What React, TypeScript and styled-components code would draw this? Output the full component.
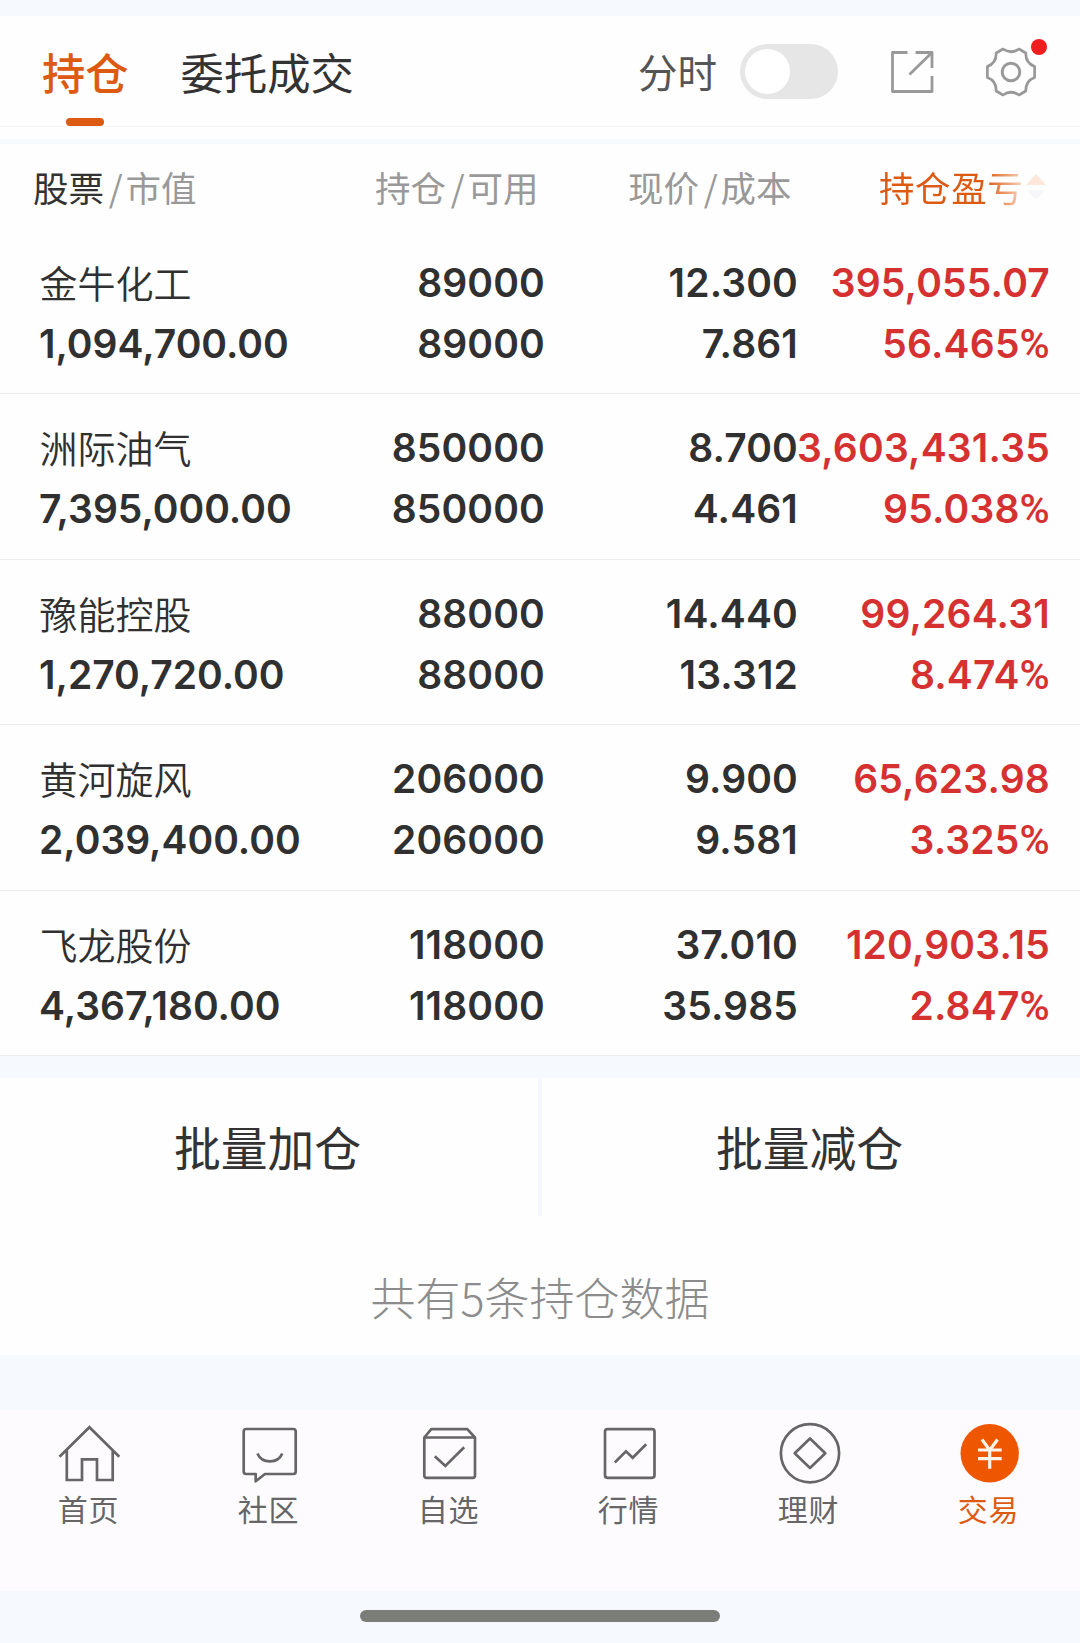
import React from 'react';
import styled, { createGlobalStyle } from 'styled-components';

const CJK = `"Noto Sans CJK SC", "Noto Sans", sans-serif`;
const ORANGE = '#dd5a12';
const BAND = '#f6faff';

const GlobalStyle = createGlobalStyle`
  * { box-sizing: border-box; }
  body { margin: 0; background: ${BAND}; font-family: ${CJK}; color: #333; }
  button { border: 0; padding: 0; background: none; font: inherit; color: inherit; }
`;

const Screen = styled.div`
  display: flex;
  flex-direction: column;
  width: 1080px;
  height: 1643px;
  padding-top: 16px;
  background: ${BAND};
  overflow: hidden;
  white-space: nowrap;
`;

const TopBar = styled.header`
  display: flex;
  justify-content: space-between;
  height: 111px;
  padding: 0 43px 0 42px;
  background: #fefefe;
  border-bottom: 1px solid #f3f5f7;
`;

const Tabs = styled.nav`
  display: flex;
  gap: 52px;
`;

const Tab = styled.button<{ $active?: boolean }>`
  display: flex;
  flex-direction: column;
  align-items: center;
  height: 110px;
  padding-top: 23px;
  font-size: 43.3px;
  line-height: 64px;
  font-weight: ${(p) => (p.$active ? 500 : 400)};
  color: ${(p) => (p.$active ? ORANGE : '#333')};

  &::after {
    content: '';
    width: 38px;
    height: 8px;
    margin-top: 15px;
    border-radius: 4px;
    background: ${(p) => (p.$active ? ORANGE : 'transparent')};
  }
`;

const Tools = styled.div`
  display: flex;
  align-items: center;
  height: 111px;
`;

const ToolLabel = styled.span`
  font-size: 39.5px;
  line-height: 60px;
  color: #555;
  margin: -2px 23px 0 0;
`;

const Switch = styled.button`
  width: 98px;
  height: 55px;
  padding: 5px;
  border-radius: 28px;
  background: #e6e6e6;
`;

const Knob = styled.span`
  display: block;
  width: 45px;
  height: 45px;
  border-radius: 50%;
  background: #fff;
`;

const IconButton = styled.button<{ $gap: number }>`
  position: relative;
  display: flex;
  margin-left: ${(p) => p.$gap}px;
`;

const Dot = styled.i`
  position: absolute;
  top: -7px;
  right: -10px;
  width: 16px;
  height: 16px;
  border-radius: 50%;
  background: #f01e1e;
`;

const Gap = styled.div<{ $h: number; $color?: string }>`
  flex: none;
  height: ${(p) => p.$h}px;
  background: ${(p) => p.$color || BAND};
`;

const TableHead = styled.div`
  display: grid;
  grid-template-columns: 342px 253px 251px 1fr;
  height: 84.5px;
  padding: 17px 30px 0 33px;
  background: #fefefe;
  font-size: 35.5px;
  line-height: 52px;
  color: #999;
`;

const HeadCell = styled.div<{ $strong?: boolean }>`
  display: flex;

  span:first-child { color: ${(p) => (p.$strong ? '#333' : 'inherit')}; }
`;

const Slash = styled.span`
  width: 21.5px;
  padding-left: 2px;
  text-align: center;
`;

const SortCell = styled.div`
  display: flex;
  align-items: center;
  height: 52px;
`;

const SortLabel = styled.span`
  letter-spacing: 0.6px;
  background: linear-gradient(90deg, ${ORANGE} 74%, #f8d3bd 100%);
  background-clip: text;
  color: transparent;
`;

const Row = styled.div`
  display: grid;
  grid-template-columns: 263px 243px 253px 252px;
  height: 165.5px;
  padding: 23px 30px 0 39px;
  background: #fefefe;
  border-bottom: 1px solid #ededed;
`;

const Cell = styled.div<{ $right?: boolean; $gain?: boolean }>`
  display: flex;
  flex-direction: column;
  align-items: ${(p) => (p.$right ? 'flex-end' : 'flex-start')};
  min-width: 0;
  color: ${(p) => (p.$gain ? '#d63131' : '#303030')};
  letter-spacing: ${(p) => (p.$gain ? '0.2px' : p.$right ? '0.15px' : '0')};
`;

const Num = styled.span`
  font-family: Inter, "Liberation Sans", sans-serif;
  font-size: 39px;
  font-weight: 600;
  line-height: 61px;
`;

const Percent = styled.span`
  font-family: Roboto, sans-serif;
  font-size: 41px;
  font-weight: 500;
  line-height: 1;
`;

const Name = styled.span`
  height: 61px;
  margin-left: 0.6px;
  font-size: 38px;
  font-weight: 350;
  line-height: 59px;
`;

const Actions = styled.div`
  display: flex;
  height: 138px;
  background: #fefefe;
`;

const Action = styled.button`
  flex: 1;
  font-size: 46.8px;
  line-height: 136px;
  padding: 0 3px 2px 0;

  & + & { border-left: 4px solid #f6f7ff; }
`;

const Summary = styled.div`
  height: 139px;
  padding-top: 48px;
  background: #fefefe;
  text-align: center;
  font-size: 45px;
  font-weight: 200;
  line-height: 66px;
  color: #8c8c8c;
`;

const NavBar = styled.nav`
  display: grid;
  grid-template-columns: repeat(6, 180px);
  height: 181px;
  padding-top: 12px;
  background: #fefbff;
`;

const NavItem = styled.button<{ $active?: boolean }>`
  display: flex;
  flex-direction: column;
  align-items: center;
  color: ${(p) => (p.$active ? ORANGE : '#666')};
`;

const NavLabel = styled.span`
  margin: -0.5px 3px 0 0;
  font-size: 30px;
  letter-spacing: 0.8px;
  line-height: 44px;
`;

const HomeIndicator = styled.div`
  width: 360px;
  height: 12px;
  margin: 19px auto 0;
  border-radius: 6px;
  background: #7b7d79;
`;

const holdings = [
  ['金牛化工', '1,094,700.00', '89000', '89000', '12.300', '7.861', '395,055.07', '56.465'],
  ['洲际油气', '7,395,000.00', '850000', '850000', '8.700', '4.461', '3,603,431.35', '95.038'],
  ['豫能控股', '1,270,720.00', '88000', '88000', '14.440', '13.312', '99,264.31', '8.474'],
  ['黄河旋风', '2,039,400.00', '206000', '206000', '9.900', '9.581', '65,623.98', '3.325'],
  ['飞龙股份', '4,367,180.00', '118000', '118000', '37.010', '35.985', '120,903.15', '2.847'],
];

const NavIcon = ({ children }: { children: React.ReactNode }) => (
  <svg width="64" height="64" viewBox="0 0 64 64" fill="none" stroke="#666" strokeWidth="2.7">
    {children}
  </svg>
);

const navItems = [
  {
    label: '首页',
    icon: (
      <NavIcon>
        <path d="M1.5 34.8 31.4 5.2 61.3 34.8M8.8 28V58H24V37.3H39V58H54.7V28" />
      </NavIcon>
    ),
  },
  {
    label: '社区',
    icon: (
      <NavIcon>
        <path strokeLinejoin="round" d="M8.2 7H55.2Q57.7 7 57.7 9.5V49.5Q57.7 52 55.2 52H27L17.7 59.3V52H8.2Q5.7 52 5.7 49.5V9.5Q5.7 7 8.2 7Z" />
        <path d="M19.4 31.5C24 42 39.8 42 44.3 31.5" />
      </NavIcon>
    ),
  },
  {
    label: '自选',
    icon: (
      <NavIcon>
        <path strokeLinejoin="round" d="M6.3 15.5 13.3 7.2H49.3L57 15.5M6.3 15.5H57V53.5Q57 55.8 54.7 55.8H8.6Q6.3 55.8 6.3 53.5Z" />
        <path d="M16.8 34.2 27.3 44 46.2 25.3" />
      </NavIcon>
    ),
  },
  {
    label: '行情',
    icon: (
      <NavIcon>
        <rect x="7" y="7.2" width="49.5" height="48.6" rx="2.5" />
        <path d="M16.8 40.5 28 29.3 34.7 35.8 48.2 22.3" />
      </NavIcon>
    ),
  },
  {
    label: '理财',
    icon: (
      <NavIcon>
        <circle cx="32" cy="31.3" r="29.1" />
        <path strokeLinejoin="round" d="M32 16.5 47.3 31.3 32 46 16.7 31.3Z" />
      </NavIcon>
    ),
  },
  {
    label: '交易',
    icon: (
      <NavIcon>
        <circle cx="31.7" cy="31.3" r="29.2" fill="#ef5600" stroke="none" />
        <path stroke="#fff3ea" strokeWidth="3.2" d="M24 17.5 31.7 28.3 39.5 17.5M20 28H43.7M20 36.7H43.7M31.7 28V46.7" />
      </NavIcon>
    ),
  },
];

export default function App() {
  return (
    <>
      <GlobalStyle />
      <Screen>
        <TopBar>
          <Tabs>
            <Tab $active>持仓</Tab>
            <Tab>委托成交</Tab>
          </Tabs>
          <Tools>
            <ToolLabel>分时</ToolLabel>
            <Switch aria-label="分时"><Knob /></Switch>
            <IconButton $gap={52}>
              <svg width="44" height="44" viewBox="0 0 44 44" fill="none" stroke="#999" strokeWidth="2.8">
                <path strokeLinejoin="round" d="M17.5 2.5H2.5V41.5H42V26M25.5 2.5H42V18" />
                <path d="M42 2.5 19.5 24.5" />
              </svg>
            </IconButton>
            <IconButton $gap={51}>
              <svg width="52" height="52" viewBox="-26 -26 52 52" fill="none" stroke="#999" strokeWidth="2.7" strokeLinejoin="round">
                <path d="M-8 -23Q0 -17.5 8 -23L14.8 -19Q14.5 -9 23.6 -5.5V5.5Q14.5 9 14.8 19L8 23Q0 17.5 -8 23L-14.8 19Q-14.5 9 -23.6 5.5V-5.5Q-14.5 -9 -14.8 -19Z" />
                <circle r="8.8" strokeWidth="3" />
              </svg>
              <Dot />
            </IconButton>
          </Tools>
        </TopBar>
        <Gap $h={12} $color="#fefefe" />
        <Gap $h={5} />
        <TableHead>
          <HeadCell $strong><span>股票</span><Slash>/</Slash><span>市值</span></HeadCell>
          <HeadCell><span>持仓</span><Slash>/</Slash><span>可用</span></HeadCell>
          <HeadCell><span>现价</span><Slash>/</Slash><span>成本</span></HeadCell>
          <SortCell>
            <SortLabel>持仓盈亏</SortLabel>
            <svg width="26" height="28" viewBox="0 0 26 28">
              <path d="M13 1 23 12H3Z" fill="#fde7da" />
              <path d="M13 27 23 17H3Z" fill="#f7f6fb" />
            </svg>
          </SortCell>
        </TableHead>
        {holdings.map(([name, value, held, usable, price, cost, gain, rate]) => (
          <Row key={name}>
            <Cell><Name>{name}</Name><Num>{value}</Num></Cell>
            <Cell $right><Num>{held}</Num><Num>{usable}</Num></Cell>
            <Cell $right><Num>{price}</Num><Num>{cost}</Num></Cell>
            <Cell $right $gain><Num>{gain}</Num><Num>{rate}<Percent>%</Percent></Num></Cell>
          </Row>
        ))}
        <Gap $h={22} />
        <Actions>
          <Action>批量加仓</Action>
          <Action>批量减仓</Action>
        </Actions>
        <Summary>共有5条持仓数据</Summary>
        <Gap $h={55} />
        <NavBar>
          {navItems.map((item, i) => (
            <NavItem key={item.label} $active={i === 5}>
              {item.icon}
              <NavLabel>{item.label}</NavLabel>
            </NavItem>
          ))}
        </NavBar>
        <HomeIndicator />
      </Screen>
    </>
  );
}
